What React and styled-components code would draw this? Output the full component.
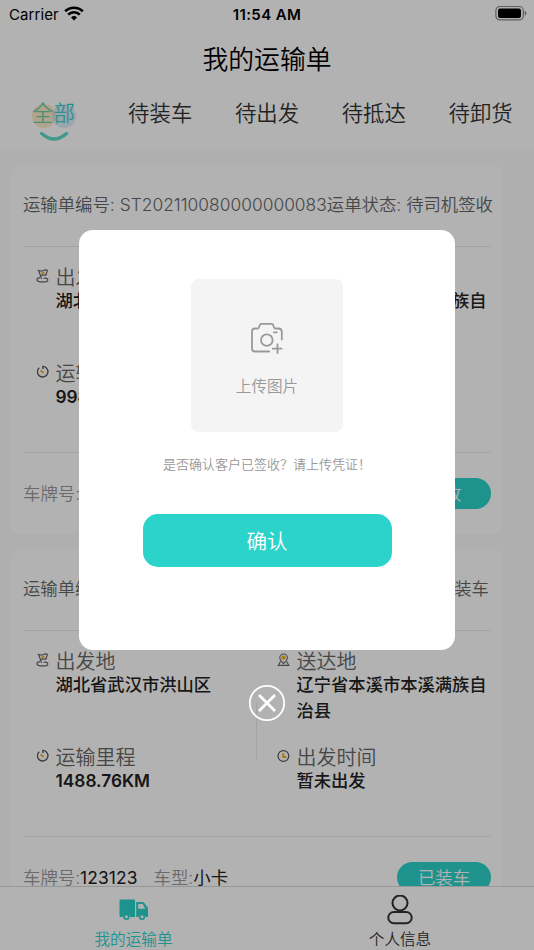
import React from "react";
import styled, { createGlobalStyle } from "styled-components";

const Global = createGlobalStyle`
  * { box-sizing: border-box; }
  body { margin: 0; background: #fff; font-family: Inter, "Noto Sans CJK SC", sans-serif; }
`;

const Phone = styled.div`
  position: relative;
  display: flex;
  flex-direction: column;
  width: 534px;
  height: 950px;
  overflow: hidden;
  background: #fff;
  white-space: nowrap;
`;

const StatusBar = styled.div`
  display: grid;
  grid-template-columns: 1fr 1fr 1fr;
  align-items: center;
  height: 28px;
  flex: none;
  padding: 0 7px;
  font-size: 15px;
  color: #000;
`;
const Carrier = styled.div`
  display: flex;
  align-items: center;
  gap: 5px;
  padding-left: 2px;
  letter-spacing: 0.1px;
`;
const Clock = styled.div`
  text-align: center;
  font-weight: 600;
  letter-spacing: 0.4px;
`;
const Battery = styled.div`
  display: flex;
  justify-content: flex-end;
`;

const TitleBar = styled.h1`
  flex: none;
  margin: 0;
  height: 61px;
  line-height: 64px;
  text-align: center;
  font-size: 25.8px;
  font-weight: 350;
  color: #000;
`;

const Tabs = styled.nav`
  display: grid;
  grid-template-columns: repeat(5, 1fr);
  flex: none;
  height: 60px;
`;
const Tab = styled.div`
  position: relative;
  text-align: center;
  line-height: 49px;
  font-size: 21.4px;
  font-weight: 350;
  color: ${(p) => (p.$active ? "#2cd3cb" : "#333")};
`;
const TabMark = styled.svg`
  position: absolute;
  left: 30px;
  top: 12px;
`;

const List = styled.main`
  flex: 1;
  min-height: 0;
  overflow: hidden;
  display: flex;
  flex-direction: column;
  gap: 14px;
  padding: 15px 32px 0 11px;
  background: #fbfbfb;
`;
const Card = styled.section`
  flex: none;
  height: 370px;
  padding: 0 11px 0 12px;
  border-radius: 9px;
  background: #fff;
`;
const CardHead = styled.header`
  display: flex;
  justify-content: space-between;
  height: 83px;
  line-height: 82px;
  border-bottom: 1px solid #e9e9e9;
  font-size: 17.35px;
  font-weight: 350;
  color: #666;
`;
const HeadText = styled.span`
  margin-right: ${(p) => p.$end || 0}px;
  letter-spacing: 0.03px;
`;
const CardBody = styled.div`
  display: grid;
  grid-template-columns: 233px 1px 1fr;
  height: 206px;
  border-bottom: 1px solid #e9e9e9;
`;
const Column = styled.div`
  display: grid;
  grid-template-rows: 96px 96px;
  padding: 16px 0 0 ${(p) => (p.$right ? 19.5 : 12.5)}px;
`;
const Rule = styled.div`
  height: 57px;
  margin-top: 72px;
  background: #ebebeb;
`;
const Field = styled.div`
  display: grid;
  grid-template-columns: 20px 1fr;
  align-content: start;
`;
const FieldIcon = styled.svg`
  margin: 6px 0 0 0.5px;
`;
const Label = styled.div`
  height: 25px;
  line-height: 30px;
  font-size: 20px;
  font-weight: 350;
  color: #666;
`;
const Value = styled.div`
  grid-column: 2;
  line-height: 26px;
  font-size: 17.3px;
  font-weight: ${(p) => (p.$latin ? 600 : 500)};
  color: #222;
  white-space: pre-line;
`;
const CardFoot = styled.footer`
  display: flex;
  align-items: center;
  height: 81px;
  line-height: 29px;
  font-size: 17.4px;
  font-weight: 350;
  color: #999;
`;
const FootItem = styled.span`
  margin-right: 16px;
  b { font-weight: 400; color: #222; letter-spacing: 0.1px; }
`;
const Pill = styled.button`
  margin-left: auto;
  width: 94px;
  height: 31px;
  padding: 0;
  border: 0;
  border-radius: 16px;
  background: #2cd3cb;
  color: #fff;
  font: inherit;
`;

const BottomBar = styled.nav`
  flex: none;
  display: grid;
  grid-template-columns: 1fr 1fr;
  height: 64px;
  border-top: 1px solid #d8d8d8;
  background: #fff;
`;
const BottomItem = styled.div`
  display: grid;
  grid-template-rows: 40px 23px;
  justify-items: center;
  align-items: center;
  padding-top: 1px;
  font-size: 15.6px;
  line-height: 21px;
  font-weight: 350;
  color: ${(p) => (p.$active ? "#2cd3cb" : "#333")};
  margin-right: ${(p) => (p.$active ? 0 : 1)}px;
  svg { margin-top: 4px; }
`;

const Overlay = styled.div`
  position: absolute;
  inset: 0;
  display: flex;
  flex-direction: column;
  align-items: center;
  padding-top: 229.5px;
  background: rgba(0, 0, 0, 0.3);
`;
const Dialog = styled.div`
  display: flex;
  flex-direction: column;
  align-items: center;
  width: 376px;
  height: 420.5px;
  flex: none;
  padding-top: 49.5px;
  border-radius: 14px;
  background: #fff;
`;
const Upload = styled.div`
  display: flex;
  flex-direction: column;
  align-items: center;
  width: 152px;
  height: 153px;
  padding-top: 43px;
  border-radius: 8px;
  background: #f4f4f4;
  font-size: 15.6px;
  line-height: 24px;
  font-weight: 350;
  color: #999;
  svg { margin-bottom: 20px; }
`;
const Message = styled.p`
  margin: 22px 0 0;
  height: 20px;
  line-height: 20px;
  font-size: 13px;
  font-weight: 350;
  color: #999;
`;
const Confirm = styled.button`
  margin-top: 40px;
  width: 249px;
  height: 53px;
  padding: 0 0 1px;
  border: 0;
  border-radius: 15px;
  background: #2cd3cb;
  color: #fff;
  font-family: inherit;
  font-size: 20.5px;
  font-weight: 350;
`;
const Close = styled.svg`
  flex: none;
  margin-top: 34px;
`;

const WifiIcon = () => (
  <svg width="20" height="16" viewBox="0 0 20 16">
    <path d="M10 14.600 7 11.500a4.400 4.400 0 0 1 6 0z" fill="#000" />
    <path d="M4.200 8.600a8.300 8.300 0 0 1 11.600 0M1.200 5.300a12.700 12.700 0 0 1 17.600 0" fill="none" stroke="#000" strokeWidth="2.700" />
  </svg>
);
const BatteryIcon = () => (
  <svg width="32" height="16" viewBox="0 0 32 16">
    <rect x=".9" y=".5" width="27.400" height="13.400" rx="4" fill="none" stroke="#888" strokeWidth="1.200" />
    <rect x="3" y="2.500" width="23" height="9.400" rx="2" fill="#000" />
    <path d="M29.700 4.800q1.700.7 1.700 2.400t-1.700 2.400z" fill="#888" />
  </svg>
);

const OriginIcon = () => (
  <FieldIcon width="14" height="14" viewBox="0 0 14 14" fill="none" stroke="#666" strokeWidth="1.200">
    <path d="M5.600 9.800 2.500 1.500Q5.500 2.500 7.500 1.500T11.300 1.300L9.900 6.200Q7.500 5.400 4.400 6.600" />
    <path d="M4.300 8.700C1.500 8.700.7 10 1 11.200q.4 1.600 3 1.600h5.200c3.400 0 3.300-3.600.3-3.600H7.600" />
    <path d="M5 3.300 8.800 3 7.800 4.900 5.800 5.100z" fill="#f5ae18" stroke="none" />
  </FieldIcon>
);
const DestinationIcon = () => (
  <FieldIcon width="14" height="14" viewBox="0 0 14 14" fill="none" stroke="#666" strokeWidth="1.100">
    <path d="M6.500 10.700C3.800 8 2.800 6.600 2.800 4.800a3.800 3.800 0 1 1 7.600 0c0 1.800-1 3.200-3.900 5.900zM3.400 8.500 1.300 12.400h10.500L9.700 8.500" />
    <circle cx="6.600" cy="4.600" r="1.600" fill="#f5ae18" stroke="#f5ae18" />
  </FieldIcon>
);
const MileageIcon = () => (
  <FieldIcon width="14" height="14" viewBox="0 0 14 14" fill="none" stroke="#555" strokeWidth="1.300">
    <path d="M3.200 2.700a5.300 5.300 0 1 0 3.700-1.300V4M9.200 2.100a5.300 5.300 0 0 1 1.600 1.300" />
    <path d="M4.600 5.300 7.600 8" stroke="#f5ae18" strokeWidth="1.800" />
  </FieldIcon>
);
const TimeIcon = () => (
  <FieldIcon width="14" height="14" viewBox="0 0 14 14" fill="none" stroke="#555" strokeWidth="1.200">
    <circle cx="6.400" cy="7" r="5.400" />
    <path d="M6.200 4.200v3.900h3.200" stroke="#f5ae18" strokeWidth="2" />
  </FieldIcon>
);

const TruckIcon = () => (
  <svg width="30" height="22" viewBox="0 0 30 22" fill="#2cd3cb">
    <path d="M1.500.500h13.500q1 0 1 1V18H11a3.700 3.700 0 0 0-7.200 0H1.500q-1 0-1-1V1.500q0-1 1-1z" />
    <path fillRule="evenodd" d="M17.200 3h6.300q1.200 0 1.900 1l3 4.300q.6.900.6 2V17q0 1-1 1h-1.400a3.700 3.700 0 0 0-7.200 0h-2.200zM19.200 5v4.700h7.200L23.500 5z" />
    <path fillRule="evenodd" d="M7.400 14.500a3.200 3.200 0 1 1 0 6.400 3.200 3.200 0 0 1 0-6.400zm0 1.700a1.500 1.500 0 1 0 0 3 1.500 1.500 0 0 0 0-3zM23 14.500a3.200 3.200 0 1 1 0 6.400 3.200 3.200 0 0 1 0-6.400zm0 1.700a1.500 1.500 0 1 0 0 3 1.500 1.500 0 0 0 0-3z" />
  </svg>
);
const UserIcon = () => (
  <svg width="26" height="30" viewBox="0 0 26 30" fill="none" stroke="#333" strokeWidth="2">
    <circle cx="13" cy="8" r="7.500" />
    <rect x="1.300" y="17" width="23.400" height="11.300" rx="5.600" />
  </svg>
);
const CameraIcon = () => (
  <svg width="34" height="33" viewBox="0 0 34 33" fill="none" stroke="#999" strokeWidth="1.800" strokeLinecap="round" strokeLinejoin="round">
    <path d="M19.200 29.500H5q-3 0-3-3V9.500q0-3 3-3h2.500q1.100 0 1.500-1L9.800 3q.3-1.100 1.400-1.100h10.600q1.100 0 1.400 1.100l.8 2.500q.4 1 1.500 1H28q3.800 0 3.800 3.500v7.500M23.800 10.300h3M22.800 26.700h8.800M27.500 22.300v8.800" />
    <circle cx="16.800" cy="18.100" r="5.800" />
  </svg>
);

const ICONS = {
  出发地: OriginIcon,
  送达地: DestinationIcon,
  运输里程: MileageIcon,
  出发时间: TimeIcon,
};

const orders = [
  { no: "ST202110080000000083", state: "待司机签收", end: -1, km: "998.76KM", time: "2021-10-08", plate: "123123", type: "小卡", action: "签收" },
  { no: "ST20211008000000082", state: "待装车", end: 2, km: "1488.76KM", time: "暂未出发", plate: "123123", type: "小卡", action: "已装车" },
];

function Info({ label, latin, children }) {
  const Icon = ICONS[label];
  return (
    <Field>
      <Icon />
      <Label>{label}</Label>
      <Value $latin={latin}>{children}</Value>
    </Field>
  );
}

function Order({ order }) {
  return (
    <Card>
      <CardHead>
        <HeadText>运输单编号: {order.no}</HeadText>
        <HeadText $end={order.end}>运单状态: {order.state}</HeadText>
      </CardHead>
      <CardBody>
        <Column>
          <Info label="出发地">湖北省武汉市洪山区</Info>
          <Info label="运输里程" latin>{order.km}</Info>
        </Column>
        <Rule />
        <Column $right>
          <Info label="送达地">{"辽宁省本溪市本溪满族自\n治县"}</Info>
          <Info label="出发时间">{order.time}</Info>
        </Column>
      </CardBody>
      <CardFoot>
        <FootItem>车牌号:<b>{order.plate}</b></FootItem>
        <FootItem>车型:<b>{order.type}</b></FootItem>
        <Pill>{order.action}</Pill>
      </CardFoot>
    </Card>
  );
}

export default function App() {
  return (
    <Phone>
      <Global />
      <StatusBar>
        <Carrier>Carrier <WifiIcon /></Carrier>
        <Clock>11:54 AM</Clock>
        <Battery><BatteryIcon /></Battery>
      </StatusBar>
      <TitleBar>我的运输单</TitleBar>
      <Tabs>
        <Tab $active>
          全部
          <TabMark width="50" height="42" viewBox="0 0 50 42">
            <circle cx="14" cy="15" r="12" fill="#f5c25a" fillOpacity=".32" />
            <circle cx="34" cy="15" r="12" fill="#8fc8e4" fillOpacity=".3" />
            <path d="M11.700 32.500q12.400 11 24.800 0" fill="none" stroke="#5fdcc8" strokeWidth="3.400" strokeLinecap="round" />
          </TabMark>
        </Tab>
        {["待装车", "待出发", "待抵达", "待卸货"].map((t) => <Tab key={t}>{t}</Tab>)}
      </Tabs>
      <List>
        {orders.map((o) => <Order key={o.no} order={o} />)}
      </List>
      <BottomBar>
        <BottomItem $active><TruckIcon />我的运输单</BottomItem>
        <BottomItem><UserIcon />个人信息</BottomItem>
      </BottomBar>
      <Overlay>
        <Dialog>
          <Upload><CameraIcon />上传图片</Upload>
          <Message>是否确认客户已签收？请上传凭证！</Message>
          <Confirm>确认</Confirm>
        </Dialog>
        <Close width="38" height="38" viewBox="0 0 38 38" fill="none" stroke="#fff">
          <circle cx="19" cy="19" r="17.200" strokeWidth="1.800" />
          <path d="m11 11 16 16m0-16-16 16" strokeWidth="2.800" />
        </Close>
      </Overlay>
    </Phone>
  );
}
